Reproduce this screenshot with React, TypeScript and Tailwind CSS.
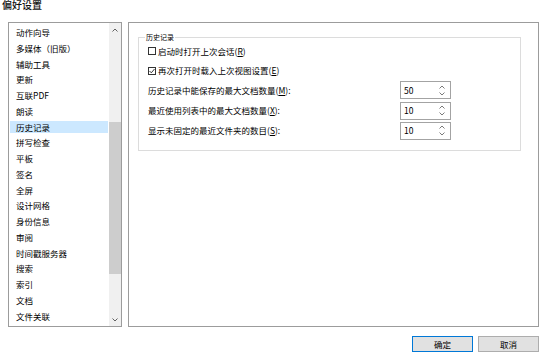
import React from 'react';

const FONT = '"Noto Sans CJK SC", "Noto Sans", sans-serif';

const CATEGORIES = [
  '动作向导',
  '多媒体（旧版）',
  '辅助工具',
  '更新',
  '互联PDF',
  '朗读',
  '历史记录',
  '拼写检查',
  '平板',
  '签名',
  '全屏',
  '设计网格',
  '身份信息',
  '审阅',
  '时间戳服务器',
  '搜索',
  '索引',
  '文档',
  '文件关联',
  '文件转换器',
];

function Chevron({ up, color = '#606060' }: { up?: boolean; color?: string }) {
  return (
    <svg width="6" height="4" viewBox="0 0 6 4" className="block">
      <polyline
        points={up ? '0.5,3.5 3,1 5.5,3.5' : '0.5,0.5 3,3 5.5,0.5'}
        fill="none"
        stroke={color}
        strokeWidth="1"
      />
    </svg>
  );
}

function Checkbox({ checked }: { checked?: boolean }) {
  return (
    <span className="w-[8px] h-[8px] border border-[#333333] bg-white flex items-center justify-center shrink-0">
      {checked && (
        <svg width="6" height="6" viewBox="0 0 6 6" className="block">
          <polyline points="0.5,3 2.3,4.8 5.5,1" fill="none" stroke="#222222" strokeWidth="0.9" />
        </svg>
      )}
    </span>
  );
}

function SpinBox({ value }: { value: string }) {
  return (
    <div className="w-[51px] h-[18px] border border-[#a3a3a3] bg-white flex items-center">
      <span className="flex-1 pl-[3px] text-[8.5px] leading-none text-black">{value}</span>
      <div className="w-[10px] mr-[3px] flex flex-col items-center gap-[3px]">
        <Chevron up color="#7a7a7a" />
        <Chevron color="#7a7a7a" />
      </div>
    </div>
  );
}

function Key({ k }: { k: string }) {
  return <span className="underline underline-offset-1">{k}</span>;
}

export default function App() {
  const selected = '历史记录';

  return (
    <div className="w-[554px] h-[364px] bg-white overflow-hidden text-black" style={{ fontFamily: FONT }}>
      {/* Title */}
      <div className="h-[22px] pl-[2px] text-[10px] leading-[10px] font-medium text-[#111111]">偏好设置</div>

      <div className="flex ml-[8px] h-[305px] gap-[6px]">
        {/* Category list */}
        <div className="w-[114px] h-full border border-[#9c9c9c] flex overflow-hidden">
          <div className="flex-1 pt-[1.5px] overflow-hidden">
            {CATEGORIES.map((c) => (
              <div key={c} className="h-[15.75px] py-[2px] px-[1px]">
                <div
                  className={`h-full flex items-center pl-[6px] text-[8.5px] leading-none whitespace-nowrap ${
                    c === selected ? 'bg-[#cce8ff]' : ''
                  }`}
                >
                  {c}
                </div>
              </div>
            ))}
          </div>
          <div className="w-[12px] bg-[#f0f0f0] flex flex-col">
            <div className="h-[14px] flex items-center justify-center">
              <Chevron up />
            </div>
            <div className="h-[85px]" />
            <div className="h-[152px] bg-[#cdcdcd]" />
            <div className="flex-1" />
            <div className="h-[13px] flex items-center justify-center">
              <Chevron />
            </div>
          </div>
        </div>

        {/* Settings panel */}
        <div className="w-[411px] h-full border border-[#9c9c9c]">
          <fieldset className="ml-[9px] mt-[10px] w-[383px] h-[118px] border border-[#dcdcdc] px-[6px]">
            <legend className="px-[1px] text-[7px] leading-[8px]">历史记录</legend>
            <div className="pl-[3px] pr-[63px] text-[8.5px] leading-none">
              <div className="h-[20px] flex items-center gap-[2px]">
                <Checkbox />
                <span>
                  启动时打开上次会话(<Key k="R" />)
                </span>
              </div>
              <div className="h-[19px] flex items-center gap-[2px]">
                <Checkbox checked />
                <span>
                  再次打开时载入上次视图设置(<Key k="E" />)
                </span>
              </div>
              <div className="h-[20px] flex items-center justify-between">
                <span>
                  历史记录中能保存的最大文档数量(<Key k="M" />):
                </span>
                <SpinBox value="50" />
              </div>
              <div className="h-[21px] flex items-center justify-between">
                <span>
                  最近使用列表中的最大文档数量(<Key k="X" />):
                </span>
                <SpinBox value="10" />
              </div>
              <div className="h-[19px] flex items-center justify-between">
                <span>
                  显示未固定的最近文件夹的数目(<Key k="S" />):
                </span>
                <SpinBox value="10" />
              </div>
            </div>
          </fieldset>
        </div>
      </div>

      {/* Dialog buttons */}
      <div className="flex justify-end gap-[5px] mt-[9px] mr-[15px]">
        <button className="w-[61px] h-[16px] bg-[#e1e1e1] border border-[#0078d7] text-[8.5px] leading-none">
          确定
        </button>
        <button className="w-[61px] h-[16px] bg-[#e1e1e1] border border-[#adadad] text-[8.5px] leading-none">
          取消
        </button>
      </div>
    </div>
  );
}
